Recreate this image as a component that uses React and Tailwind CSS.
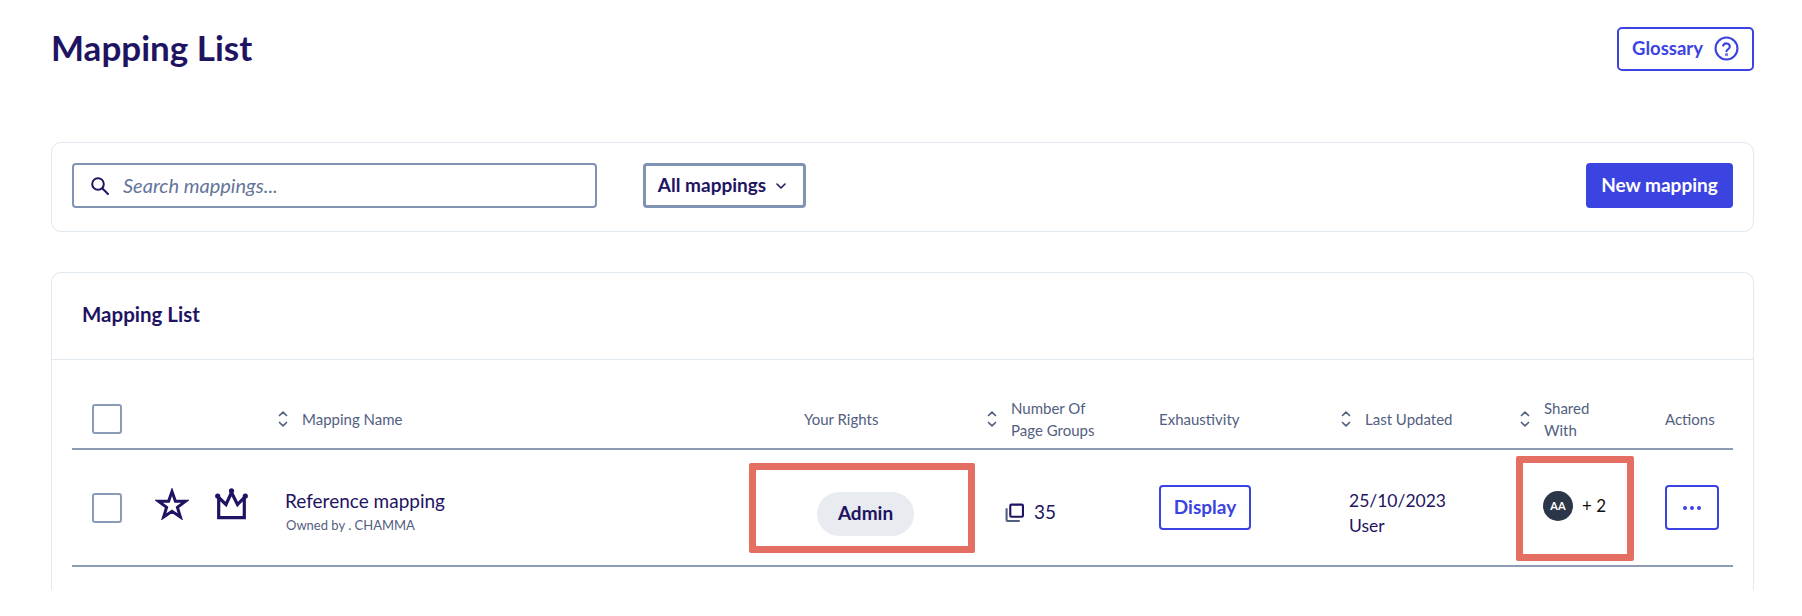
const font = { fontFamily: '"Lato", "Open Sans", sans-serif' };

function Sort() {
  return (
    <svg width="10" height="16" viewBox="0 0 10 16" fill="none" stroke="#52607f" strokeWidth="1.7" strokeLinecap="round" strokeLinejoin="round" className="shrink-0">
      <path d="M1.5 4.5 5 1.2l3.5 3.3" />
      <path d="M1.5 11.5 5 14.8l3.5-3.3" />
    </svg>
  );
}

function Head({ sort, children, className = "" }) {
  return (
    <div className={"flex items-center " + className}>
      {sort && <Sort />}
      <div className={"text-[15px] leading-[22px] text-[#52607f] " + (sort ? "ml-[14px]" : "")}>{children}</div>
    </div>
  );
}

function Check() {
  return <div className="ml-[20px] w-[30px] h-[30px] rounded-[3px] border-2 border-[#8a9bb8] bg-white" />;
}

const cols = "grid grid-cols-[206px_517px_192px_172px_182px_179px_145px_68px]";

export default function App() {
  return (
    <div className="relative w-[1802px] h-[616px] overflow-hidden bg-white pl-[51px] pr-[48px] pt-[27px] text-[#1e1462]" style={font}>
      <div className="flex justify-between items-start h-[115px]">
        <h1 className="text-[35px] leading-[40px] font-bold text-[#1e1462]">Mapping List</h1>
        <button className="flex items-center justify-center gap-[11px] w-[137px] h-[44px] pb-[1px] rounded-[5px] border-2 border-[#3b43e0] text-[#3b43e0] text-[18.5px] font-bold">
          Glossary
          <svg width="25" height="25" viewBox="0 0 24 24" fill="none" stroke="#3b43e0" strokeWidth="2" strokeLinecap="round">
            <circle cx="12" cy="12" r="10.5" />
            <path d="M8.8 9.3a3.3 3.3 0 0 1 6.4 1c0 2.2-3.2 2.6-3.2 4.4" />
            <circle cx="12" cy="18" r="0.4" fill="#3b43e0" />
          </svg>
        </button>
      </div>

      <div className="flex items-start justify-between h-[90px] rounded-[10px] border border-[#e2e8f0] px-[20px] pt-[20px]">
        <div className="flex items-center gap-[46px]">
          <div className="flex items-center w-[525px] h-[45px] rounded-[4px] border-2 border-[#8093b2] pl-[16px]">
            <svg width="20" height="20" viewBox="0 0 20 20" fill="none" stroke="#1e1462" strokeWidth="2" strokeLinecap="round">
              <circle cx="8" cy="8" r="5.8" />
              <path d="m12.5 12.5 5.5 5.5" />
            </svg>
            <span className="ml-[13px] pb-[2px] text-[20px] italic text-[#64759a]">Search mappings...</span>
          </div>
          <button className="flex items-center justify-center gap-[9px] w-[163px] h-[45px] pr-[4px] rounded-[4px] border-[3px] border-[#8093b2] text-[19px] font-bold text-[#1e1462]">
            All mappings
            <svg width="12" height="8" viewBox="0 0 12 8" fill="none" stroke="#1e1462" strokeWidth="1.6" strokeLinecap="round" strokeLinejoin="round">
              <path d="m2 2 4 4 4-4" />
            </svg>
          </button>
        </div>
        <button className="w-[147px] h-[45px] rounded-[4px] bg-[#3b43e0] text-white text-[19px] font-bold">New mapping</button>
      </div>

      <div className="mt-[40px] h-[318px] rounded-t-[10px] border border-b-0 border-[#e2e8f0]">
        <div className="h-[87px] border-b border-[#e2e8f0] pl-[30px] pt-[28px] text-[20.5px] leading-[26px] font-bold text-[#1e1462]">Mapping List</div>
        <div className="px-[20px]">
          <div className={cols + " h-[90px] pt-[30px] items-center border-b-2 border-[#8d9bb3]"}>
            <Check />
            <Head sort>Mapping Name</Head>
            <Head className="pl-[9px]">Your Rights</Head>
            <Head sort>Number Of<br />Page Groups</Head>
            <Head>Exhaustivity</Head>
            <Head sort>Last Updated</Head>
            <Head sort>Shared<br />With</Head>
            <Head>Actions</Head>
          </div>
          <div className={cols + " h-[117px] items-center border-b-2 border-[#8d9bb3]"}>
            <div className="flex items-center">
              <Check />
              <svg className="ml-[33px] mb-[7px]" width="34" height="32" viewBox="0 0 34 32" fill="none" stroke="#1e1462" strokeWidth="3" strokeLinejoin="miter">
                <path d="M17 3.5 20.4 13.2H30.6L22.4 19.3 25.4 29 17 23.2 8.6 29 11.6 19.3 3.4 13.2H13.6Z" />
              </svg>
              <svg className="ml-[26px] mb-[7px]" width="34" height="32" viewBox="0 0 34 32" fill="none">
                <path d="M3.7 9.5 11 16.5 16.5 4.5 22.5 16.5 29.3 9.5V29.6H3.7Z" stroke="#1e1462" strokeWidth="3.2" />
                <circle cx="2.7" cy="8" r="2.6" fill="#1e1462" />
                <circle cx="16.5" cy="2.8" r="2.6" fill="#1e1462" />
                <circle cx="30.3" cy="8" r="2.6" fill="#1e1462" />
              </svg>
            </div>
            <div className="pl-[7px] pt-[11px]">
              <div className="text-[19px] leading-[24px] text-[#1e1462]">Reference mapping</div>
              <div className="ml-[1px] text-[13px] leading-[24px] text-[#52607f]">Owned by . CHAMMA</div>
            </div>
            <div className="relative h-full">
              <div className="absolute left-[22px] top-[42px] flex items-center justify-center w-[97px] h-[44px] pb-[2px] rounded-full bg-[#e8ebf0] text-[19px] font-bold text-[#1e1462]">Admin</div>
              <div className="absolute -left-[46px] top-[13px] w-[226px] h-[90px] rounded-[2px] border-[7px] border-[#e36e61]" />
            </div>
            <div className="flex items-center pl-[18px] pt-[10px]">
              <svg width="19" height="19" viewBox="0 0 18 18" fill="none" stroke="#1e1462" strokeWidth="2">
                <rect x="5" y="1.5" width="12" height="11.5" rx="1" />
                <path d="M1.5 5v11a1 1 0 0 0 1 1H14" stroke="#52607f" />
              </svg>
              <span className="ml-[10px] text-[19px] text-[#1e1462]">35</span>
            </div>
            <div>
              <button className="flex items-center justify-center w-[92px] h-[45px] rounded-[4px] border-2 border-[#3b43e0] text-[19px] font-bold text-[#3b43e0]">Display</button>
            </div>
            <div className="pl-[8px] pt-[10px] text-[17.5px] leading-[25px] text-[#1e1462]">25/10/2023<br />User</div>
            <div className="relative h-full flex items-start">
              <div className="flex items-center mt-[41px] ml-[23px]">
                <div className="flex items-center justify-center w-[30px] h-[30px] rounded-full bg-[#2b3648] text-white text-[11px] font-bold">AA</div>
                <span className="ml-[9px] text-[17px] text-[#111]">+ 2</span>
              </div>
              <div className="absolute -left-[4px] top-[6px] w-[118px] h-[105px] rounded-[2px] border-[7px] border-[#e36e61]" />
            </div>
            <div>
              <button className="flex items-center justify-center gap-[3px] w-[54px] h-[45px] rounded-[4px] border-2 border-[#3b43e0]">
                <span className="w-[4px] h-[4px] rounded-full bg-[#3b43e0]" />
                <span className="w-[4px] h-[4px] rounded-full bg-[#3b43e0]" />
                <span className="w-[4px] h-[4px] rounded-full bg-[#3b43e0]" />
              </button>
            </div>
          </div>
        </div>
      </div>
    </div>
  );
}
